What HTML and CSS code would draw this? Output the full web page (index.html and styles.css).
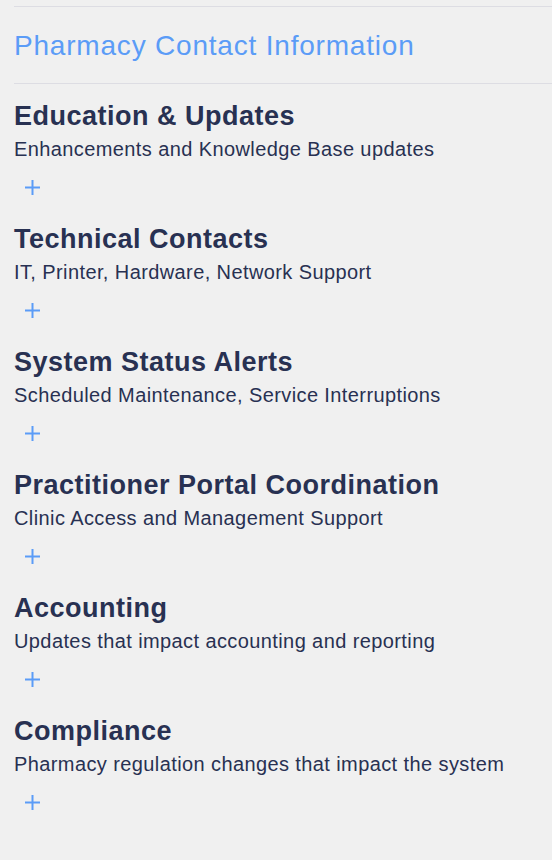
FILE: index.html
```html
<!DOCTYPE html>
<html>
<head>
<meta charset="utf-8">
<link rel="stylesheet" href="styles.css">
</head>
<body>
<div class="page">
  <div class="title-block">
    <h1 class="title">Pharmacy Contact Information</h1>
  </div>
  <div class="section">
    <h2 class="sec-title">Education &amp; Updates</h2>
    <p class="sec-sub">Enhancements and Knowledge Base updates</p>
    <button class="add"><svg viewBox="0 0 15 15" width="15" height="15"><path d="M7.5 0v15M0 7.5h15" stroke="currentColor" stroke-width="2" fill="none"/></svg></button>
  </div>
  <div class="section">
    <h2 class="sec-title">Technical Contacts</h2>
    <p class="sec-sub">IT, Printer, Hardware, Network Support</p>
    <button class="add"><svg viewBox="0 0 15 15" width="15" height="15"><path d="M7.5 0v15M0 7.5h15" stroke="currentColor" stroke-width="2" fill="none"/></svg></button>
  </div>
  <div class="section">
    <h2 class="sec-title">System Status Alerts</h2>
    <p class="sec-sub">Scheduled Maintenance, Service Interruptions</p>
    <button class="add"><svg viewBox="0 0 15 15" width="15" height="15"><path d="M7.5 0v15M0 7.5h15" stroke="currentColor" stroke-width="2" fill="none"/></svg></button>
  </div>
  <div class="section">
    <h2 class="sec-title">Practitioner Portal Coordination</h2>
    <p class="sec-sub">Clinic Access and Management Support</p>
    <button class="add"><svg viewBox="0 0 15 15" width="15" height="15"><path d="M7.5 0v15M0 7.5h15" stroke="currentColor" stroke-width="2" fill="none"/></svg></button>
  </div>
  <div class="section">
    <h2 class="sec-title">Accounting</h2>
    <p class="sec-sub">Updates that impact accounting and reporting</p>
    <button class="add"><svg viewBox="0 0 15 15" width="15" height="15"><path d="M7.5 0v15M0 7.5h15" stroke="currentColor" stroke-width="2" fill="none"/></svg></button>
  </div>
  <div class="section">
    <h2 class="sec-title">Compliance</h2>
    <p class="sec-sub">Pharmacy regulation changes that impact the system</p>
    <button class="add"><svg viewBox="0 0 15 15" width="15" height="15"><path d="M7.5 0v15M0 7.5h15" stroke="currentColor" stroke-width="2" fill="none"/></svg></button>
  </div>
</div>
</body>
</html>
```

FILE: styles.css
```css
html, body {
  margin: 0;
  padding: 0;
  background: #f0f0f0;
}
body {
  font-family: "Liberation Sans", Arial, sans-serif;
  color: #283152;
}
.page {
  padding: 6px 0 0 14px;
}
.title-block {
  border-top: 1px solid #dddde3;
  border-bottom: 1px solid #dddde3;
  height: 76px;
  box-sizing: content-box;
  display: flex;
  align-items: center;
}
.title {
  margin: 0;
  padding-top: 2px;
  font-size: 28px;
  letter-spacing: 0.8px;
  font-weight: normal;
  color: #5b9cf7;
  line-height: 34px;
}
.section {
  height: 123px;
  padding-top: 16px;
  box-sizing: border-box;
}
.sec-title {
  margin: 0;
  font-size: 27px;
  letter-spacing: 0.5px;
  font-weight: bold;
  line-height: 32px;
}
.sec-sub {
  margin: 5px 0 0;
  font-size: 20px;
  letter-spacing: 0.4px;
  line-height: 24px;
}
.add {
  display: block;
  margin: 19px 0 0 11px;
  padding: 0;
  border: none;
  background: none;
  color: #5b9cf7;
  width: 15px;
  height: 15px;
}
.add svg {
  display: block;
}
```
